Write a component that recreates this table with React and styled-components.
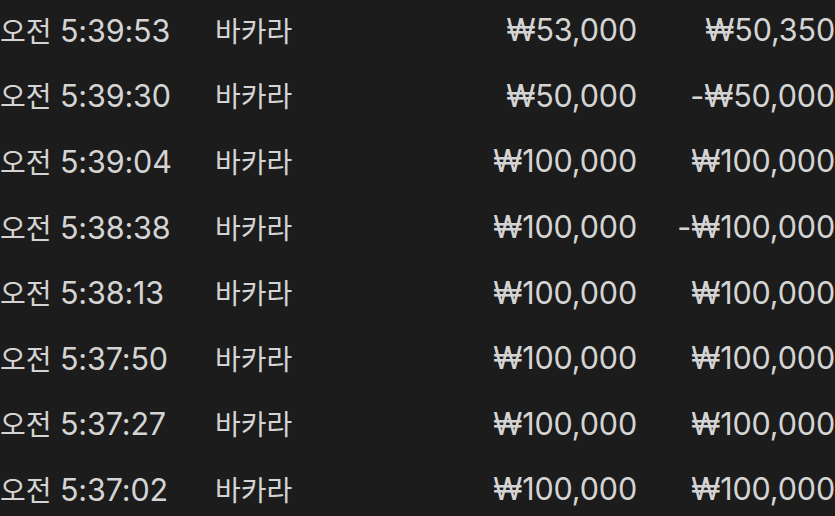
import React from "react";
import styled, { createGlobalStyle } from "styled-components";

const Global = createGlobalStyle`
  html, body { margin: 0; padding: 0; background: #1c1c1c; overflow: hidden; }
  #root { width: 835px; height: 516px; overflow: hidden; }
`;

const List = styled.div`
  display: flex;
  flex-direction: column;
  margin-top: -3px;
  font-family: Inter, "Noto Sans CJK KR", sans-serif;
  font-size: 30.5px;
  letter-spacing: -0.15px;
  color: #d4d4d4;
`;

const Row = styled.div`
  display: grid;
  grid-template-columns: 215px 200px 222px 198px;
  align-items: center;
  height: 65.6px;
  white-space: nowrap;
`;

const Cell = styled.div`
  text-align: ${(p) => (p.$right ? "right" : "left")};
`;

const Hangul = styled.span`
  font-family: "Noto Sans CJK KR", sans-serif;
  font-size: 28px;
  letter-spacing: 0;
  margin-right: ${(p) => p.$gap || "0"};
`;

const rows = [
  ["5:39:53", "₩53,000", "₩50,350"],
  ["5:39:30", "₩50,000", "-₩50,000"],
  ["5:39:04", "₩100,000", "₩100,000"],
  ["5:38:38", "₩100,000", "-₩100,000"],
  ["5:38:13", "₩100,000", "₩100,000"],
  ["5:37:50", "₩100,000", "₩100,000"],
  ["5:37:27", "₩100,000", "₩100,000"],
  ["5:37:02", "₩100,000", "₩100,000"],
];

export default function App() {
  return (
    <>
      <Global />
      <List>
        {rows.map(([t, bet, win]) => (
          <Row key={t}>
            <Cell>
              <Hangul>오전</Hangul> {t}
            </Cell>
            <Cell>
              <Hangul>바카라</Hangul>
            </Cell>
            <Cell $right>{bet}</Cell>
            <Cell $right>{win}</Cell>
          </Row>
        ))}
      </List>
    </>
  );
}
